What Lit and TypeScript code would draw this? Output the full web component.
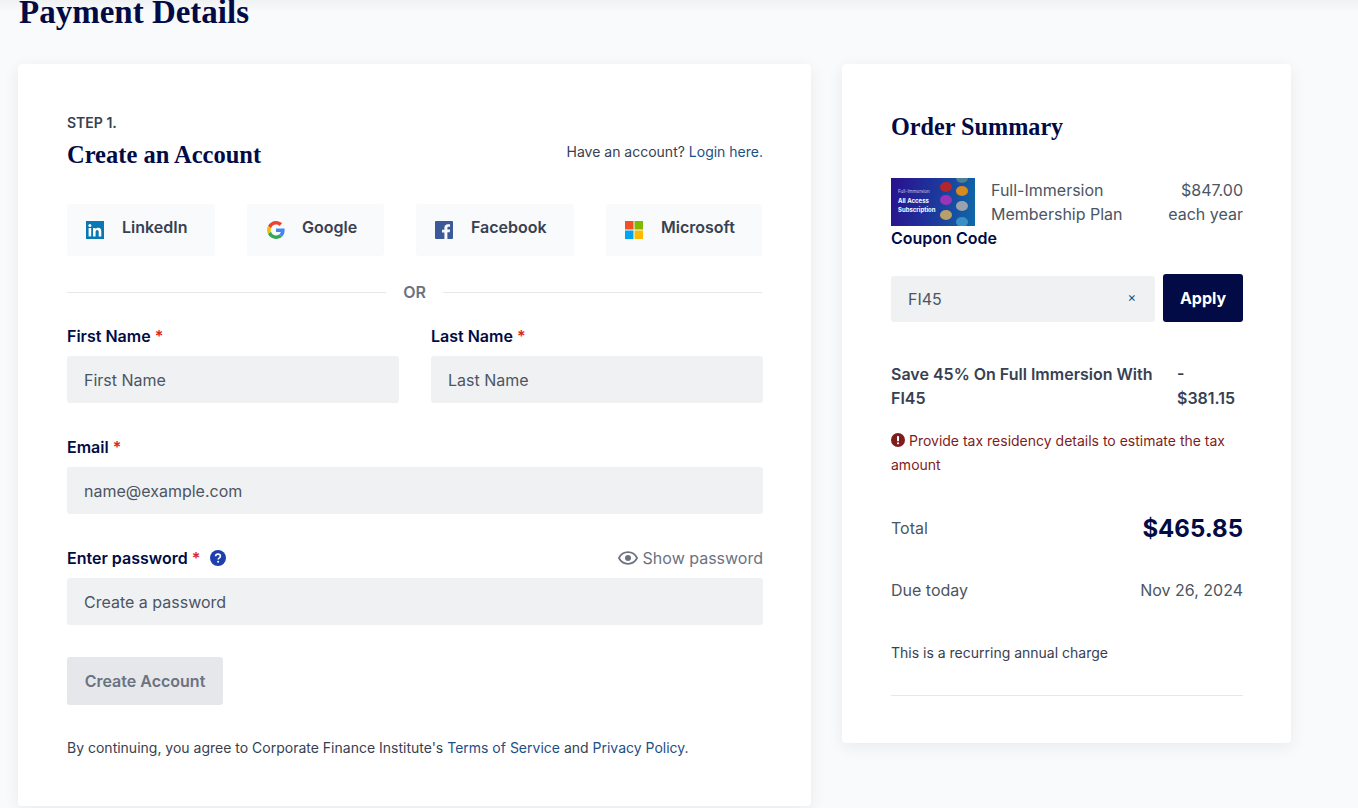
import { LitElement, html, css } from "lit";
import { customElement } from "lit/decorators.js";

@customElement("app-root")
export class AppRoot extends LitElement {
  static styles = css`
    :host { display: block; width: 1358px; height: 808px; overflow: hidden; background: #f9fafb; font-family: Inter, "Liberation Sans", sans-serif; color: #374151; position: relative; }
    * { box-sizing: border-box; }
    .topshade { position: absolute; left: 0; right: 0; top: 0; height: 12px; background: linear-gradient(#f0f1f3, #f9fafb); }
    .page { position: relative; height: 808px; padding: 0 0 0 18px; overflow: hidden; }
    h1 { position: relative; margin: -8px 0 0 1px; height: 72px; font: 700 33px/40px "Liberation Serif", serif; color: #020b45; }
    .cols { display: flex; gap: 31px; align-items: flex-start; }
    .card { background: #fff; border-radius: 4px; box-shadow: 0 4px 16px rgba(17, 24, 39, 0.07); }
    .left { width: 793px; height: 742px; padding: 51px 48px 0 49px; }
    .right { width: 449px; height: 679px; padding: 49px 48px 0 49px; }
    .step { font-size: 14px; line-height: 16px; font-weight: 600; color: #374151; height: 16px; }
    .head { display: flex; justify-content: space-between; align-items: center; height: 32px; margin-top: 8px; }
    h2 { margin: 0; font: 700 24.5px/32px "Liberation Serif", serif; color: #020b45; }
    .have { font-size: 14px; line-height: 20px; margin-top: -7px; }
    a { color: #1d4f86; text-decoration: none; }
    .social { display: flex; justify-content: space-between; margin-top: 33px; width: 695px; }
    .sbtn { height: 52px; background: #f9fafb; border-radius: 3px; display: flex; align-items: center; padding: 0 0 6px 19px; gap: 18px; font-size: 16px; font-weight: 600; color: #374151; }
    .sbtn svg { width: 18px; height: 18px; margin-top: 6px; flex: none; }
    .sbtn.goog { padding-left: 20px; gap: 17px; }
    .or { display: flex; align-items: center; gap: 17px; margin-top: 24px; height: 24px; width: 695px; font-size: 16px; font-weight: 600; color: #6b7280; }
    .or i { flex: 1; height: 1px; background: #e5e7eb; }
    .row { display: flex; gap: 32px; margin-top: 20px; }
    .field { flex: 1; display: block; }
    .stack { margin-top: 32px; }
    .label { display: flex; align-items: center; height: 24px; font-size: 16px; line-height: 24px; font-weight: 600; color: #020b45; }
    .req { color: #dc2626; font-weight: 600; }
    .input { height: 47px; margin-top: 8px; background: #f0f1f3; border-radius: 3px; padding: 0 17px; display: flex; align-items: center; font-size: 16px; color: #4b5563; }
    .help { width: 16px; height: 16px; margin-left: 10px; }
    .show { margin-left: auto; display: flex; align-items: center; gap: 5px; color: #6b7280; font-weight: 400; }
    .show svg { width: 20px; height: 20px; }
    .create { margin-top: 32px; width: 156px; height: 48px; border-radius: 3px; background: #e5e7eb; color: #6b7280; display: flex; align-items: center; justify-content: center; font-size: 16px; font-weight: 600; }
    .terms { margin-top: 33px; font-size: 14px; line-height: 20px; color: #374151; }
    .right h2 { line-height: 28px; font-size: 24.2px; }
    .item { display: flex; margin-top: 37px; font-size: 16px; line-height: 24px; color: #4b5563; height: 48px; }
    .thumb { width: 84px; height: 48px; flex: none; background: linear-gradient(100deg, #2a0f8f 0%, #1c3a9c 55%, #0f6aa8 100%); position: relative; overflow: hidden; color: #fff; font-size: 6px; line-height: 9px; font-weight: 700; padding: 10px 0 0 7px; }
    .thumb .faint { display: block; font-weight: 400; font-size: 4.500px; opacity: 0.7; line-height: 8px; }
    .dot { position: absolute; border-radius: 50%; width: 12px; height: 10px; }
    .iname { margin-left: 16px; flex: 1; }
    .iprice { text-align: right; }
    .cc { font-size: 16px; line-height: 24px; font-weight: 600; color: #020b45; }
    .coupon { display: flex; gap: 8px; margin-top: 24px; align-items: flex-end; }
    .cin { width: 264px; height: 46px; margin: 0; justify-content: space-between; padding: 0 19px 1px 17px; }
    .x { color: #1d4f86; font-size: 13px; margin-top: -3px; }
    .apply { width: 80px; height: 48px; background: #020b45; color: #fff; border-radius: 3px; display: flex; align-items: center; justify-content: center; font-size: 16px; font-weight: 700; }
    .save { display: flex; justify-content: space-between; margin-top: 40px; font-size: 16px; line-height: 24px; font-weight: 600; color: #374151; }
    .save .st { width: 286px; }
    .save .sp { width: 66px; }
    .warn { margin-top: 19px; font-size: 14px; line-height: 24px; color: #7f1d1d; }
    .warn svg { width: 14px; height: 14px; vertical-align: -1px; }
    .total { display: flex; justify-content: space-between; align-items: center; margin-top: 35px; height: 32px; font-size: 16px; color: #4b5563; }
    .total b { font-size: 24px; font-weight: 700; color: #020b45; }
    .due { display: flex; justify-content: space-between; margin-top: 34px; font-size: 16px; line-height: 24px; color: #4b5563; }
    .rec { margin-top: 41px; font-size: 14px; line-height: 20px; color: #374151; }
    .hr { height: 1px; background: #e5e7eb; margin-top: 32px; }
  `;

  render() {
    return html`
      <div class="page">
        <div class="topshade"></div>
        <h1>Payment Details</h1>
        <div class="cols">
          <section class="card left">
            <div class="step">STEP 1.</div>
            <div class="head">
              <h2>Create an Account</h2>
              <div class="have">Have an account? <a>Login here.</a></div>
            </div>
            <div class="social">
              <div class="sbtn" style="width:148px">
                <svg viewBox="0 0 18 18"><rect width="18" height="18" fill="#0a77b5"/><rect x="2.6" y="7" width="2.6" height="8.4" fill="#fff"/><circle cx="3.9" cy="4.4" r="1.5" fill="#fff"/><path d="M7 7h2.5v1.2c.5-.8 1.4-1.4 2.6-1.4 2.4 0 3.2 1.5 3.2 3.8v4.8h-2.6v-4.2c0-1.1-.3-2.1-1.5-2.1s-1.6 1-1.6 2.1v4.2H7z" fill="#fff"/></svg>
                LinkedIn
              </div>
              <div class="sbtn goog" style="width:137px">
                <svg viewBox="0 0 48 48"><path fill="#EA4335" d="M24 9.5c3.5 0 6.700 1.200 9.200 3.600l6.900-6.900C35.900 2.400 30.500 0 24 0 14.600 0 6.500 5.400 2.600 13.200l8 6.200C12.500 13.700 17.800 9.500 24 9.500z"/><path fill="#4285F4" d="M47 24.500c0-1.600-.1-3.100-.4-4.500H24v9h12.900c-.6 3-2.200 5.500-4.700 7.200l7.700 6C44.400 38.100 47 31.900 47 24.500z"/><path fill="#FBBC05" d="M10.600 28.600C10.100 27.100 9.800 25.600 9.800 24s.3-3.100.8-4.600l-8-6.200C.9 16.500 0 20.100 0 24s.9 7.500 2.600 10.800z"/><path fill="#34A853" d="M24 48c6.500 0 11.900-2.100 15.900-5.800l-7.700-6c-2.200 1.400-4.900 2.300-8.200 2.300-6.200 0-11.500-4.200-13.400-9.900l-8 6.200C6.500 42.600 14.600 48 24 48z"/></svg>
                Google
              </div>
              <div class="sbtn" style="width:158px">
                <svg viewBox="0 0 18 18"><path d="M1 0h16a1 1 0 0 1 1 1v16a1 1 0 0 1-1 1h-4.600v-6.800h2.300l.4-2.700h-2.700V7c0-.8.3-1.300 1.400-1.300H15V3.300c-.3 0-1.100-.1-2.100-.1-2.100 0-3.500 1.300-3.500 3.600v1.900H7v2.700h2.400V18H1a1 1 0 0 1-1-1V1a1 1 0 0 1 1-1z" fill="#3c5a99"/></svg>
                Facebook
              </div>
              <div class="sbtn" style="width:156px">
                <svg viewBox="0 0 18 18"><rect width="8.500" height="8.500" fill="#f25022"/><rect x="9.500" width="8.500" height="8.500" fill="#7fba00"/><rect y="9.500" width="8.500" height="8.500" fill="#00a4ef"/><rect x="9.500" y="9.500" width="8.500" height="8.500" fill="#ffb900"/></svg>
                Microsoft
              </div>
            </div>
            <div class="or"><i></i>OR<i></i></div>
            <div class="row">
              <div class="field"><div class="label"><span>First Name <span class="req">*</span></span></div><div class="input">First Name</div></div>
              <div class="field"><div class="label"><span>Last Name <span class="req">*</span></span></div><div class="input">Last Name</div></div>
            </div>
            <div class="stack">
              <div class="label"><span>Email <span class="req">*</span></span></div>
              <div class="input">name@example.com</div>
            </div>
            <div class="stack">
              <div class="label"><span>Enter password <span class="req">*</span></span>
                <svg class="help" viewBox="0 0 16 16"><circle cx="8" cy="8" r="8" fill="#1e40af"/><path d="M5.600 6.200C5.700 4.900 6.700 4.100 8 4.100c1.400 0 2.400.9 2.400 2 0 1-.6 1.500-1.300 2-.6.400-.9.700-.9 1.400" fill="none" stroke="#fff" stroke-width="1.600"/><circle cx="8.100" cy="11.800" r="1" fill="#fff"/></svg>
                <span class="show">
                  <svg viewBox="0 0 20 20" fill="none"><path d="M.9 10C2.900 6.200 6.100 4.200 10 4.200s7.100 2 9.100 5.800c-2 3.800-5.200 5.800-9.100 5.800S2.900 13.800.9 10z" stroke="#6b7280" stroke-width="1.700"/><circle cx="10" cy="10" r="3" fill="#6b7280"/></svg>
                  <span>Show password</span>
                </span>
              </div>
              <div class="input">Create a password</div>
            </div>
            <div class="create">Create Account</div>
            <div class="terms">By continuing, you agree to Corporate Finance Institute's <a>Terms of Service</a> and <a>Privacy Policy</a>.</div>
          </section>
          <aside class="card right">
            <h2>Order Summary</h2>
            <div class="item">
              <div class="thumb">
                <span class="faint">Full-Immersion</span>All Access<br />Subscription
                <span class="dot" style="left:49px;top:4px;background:#b3262e"></span>
                <span class="dot" style="left:49px;top:17px;background:#9b34b8"></span>
                <span class="dot" style="left:49px;top:32px;background:#b9a06a"></span>
                <span class="dot" style="left:65px;top:-5px;background:#4f7f95"></span>
                <span class="dot" style="left:65px;top:8px;background:#d98a1f"></span>
                <span class="dot" style="left:65px;top:23px;background:#9aa3ad"></span>
                <span class="dot" style="left:65px;top:39px;background:#3a8fc5"></span>
              </div>
              <div class="iname">Full-Immersion<br />Membership Plan</div>
              <div class="iprice">$847.00<br />each year</div>
            </div>
            <div class="cc">Coupon Code</div>
            <div class="coupon">
              <div class="input cin">FI45<span class="x">×</span></div>
              <div class="apply">Apply</div>
            </div>
            <div class="save">
              <div class="st">Save 45% On Full Immersion With FI45</div>
              <div class="sp">- $381.15</div>
            </div>
            <div class="warn">
              <svg viewBox="0 0 14 14"><circle cx="7" cy="7" r="7" fill="#7f1d1d"/><rect x="6" y="3" width="2" height="5.200" rx=".6" fill="#fff"/><circle cx="7" cy="10.300" r="1.100" fill="#fff"/></svg>
              Provide tax residency details to estimate the tax amount
            </div>
            <div class="total"><span>Total</span><b>$465.85</b></div>
            <div class="due"><span>Due today</span><span>Nov 26, 2024</span></div>
            <div class="rec">This is a recurring annual charge</div>
            <div class="hr"></div>
          </aside>
        </div>
      </div>
    `;
  }
}
